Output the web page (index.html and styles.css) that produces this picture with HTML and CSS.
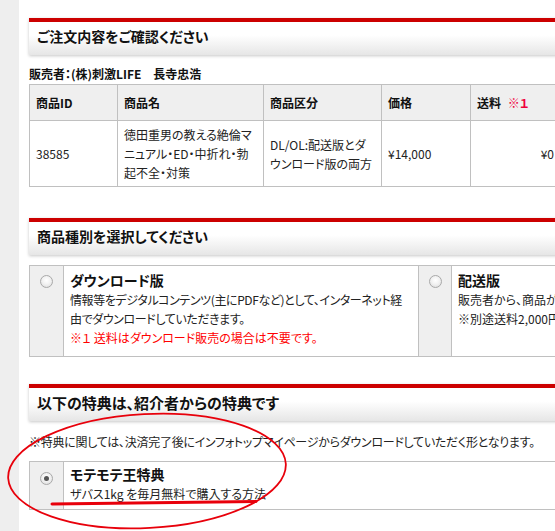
FILE: index.html
```html
<!DOCTYPE html>
<html lang="ja">
<head>
<meta charset="utf-8">
<title>ご注文内容をご確認ください</title>
<link rel="stylesheet" href="styles.css">
</head>
<body>
<div class="page">
  <aside class="strip"></aside>
  <main class="main">
    <section class="sec">
      <h2 class="sec-head">ご注文内容をご確認ください</h2>
      <p class="seller">販売者：(株)刺激LIFE　長寺忠浩</p>
      <table class="order">
        <colgroup>
          <col class="c-id"><col class="c-name"><col class="c-type"><col class="c-price"><col class="c-ship">
        </colgroup>
        <thead>
          <tr>
            <th>商品ID</th>
            <th>商品名</th>
            <th>商品区分</th>
            <th>価格</th>
            <th>送料 <span class="mark">※１</span></th>
          </tr>
        </thead>
        <tbody>
          <tr>
            <td>38585</td>
            <td>徳田重男の教える絶倫マニュアル・ED・中折れ・勃起不全・対策</td>
            <td>DL/OL:配送版とダウンロード版の両方</td>
            <td>¥14,000</td>
            <td class="right">¥0</td>
          </tr>
        </tbody>
      </table>
    </section>

    <section class="sec sec-2">
      <h2 class="sec-head">商品種別を選択してください</h2>
      <div class="opts">
        <div class="radio-cell"><span class="radio"></span></div>
        <div class="opt-body">
          <div class="opt-title">ダウンロード版</div>
          <p class="opt-desc tight">情報等をデジタルコンテンツ(主にPDFなど)として、インターネット経由でダウンロードしていただきます。</p>
          <p class="opt-desc red">※１ 送料はダウンロード販売の場合は不要です。</p>
        </div>
        <div class="radio-cell"><span class="radio"></span></div>
        <div class="opt-body">
          <div class="opt-title">配送版</div>
          <p class="opt-desc nowrap">販売者から、商品が郵送されます。</p>
          <p class="opt-desc nowrap">※別途送料2,000円がかかります。</p>
        </div>
      </div>
    </section>

    <section class="sec sec-3">
      <h2 class="sec-head big">以下の特典は、紹介者からの特典です</h2>
      <p class="note">※特典に関しては、決済完了後にインフォトップマイページからダウンロードしていただく形となります。</p>
      <div class="bonus">
        <div class="radio-cell bonus-radio"><span class="radio checked"></span></div>
        <div class="opt-body bonus-body">
          <div class="opt-title">モテモテ王特典</div>
          <p class="opt-desc">ザバス1kg を毎月無料で購入する方法</p>
        </div>
      </div>
    </section>
  </main>

  <svg class="annot" width="555" height="531" viewBox="0 0 555 531" aria-hidden="true">
    <ellipse cx="147" cy="471" rx="139" ry="57" transform="rotate(-3 147 471)" fill="none" stroke="#e8000b" stroke-width="1.8"/>
    <path d="M52 504 L256 501.5" stroke="#e8000b" stroke-width="3" stroke-linecap="round" fill="none"/>
  </svg>
</div>
</body>
</html>
```

FILE: styles.css
```css
* { box-sizing: border-box; }

html, body {
  margin: 0;
  padding: 0;
  background: #fff;
}

body {
  font-family: "Noto Sans CJK JP", "Noto Sans", sans-serif;
  font-feature-settings: "palt";
  color: #222;
  font-size: 12px;
}

.page {
  position: relative;
  display: flex;
  width: 555px;
  height: 531px;
  overflow: hidden;
}

.strip {
  flex: 0 0 19px;
  background: #eeeeee;
}

.main {
  flex: 0 0 auto;
  width: 788px;
  padding: 18px 0 0 10px;
}

.sec-head {
  margin: 0;
  height: 37px;
  border-top: 4px solid #cc0000;
  padding-left: 8px;
  line-height: 29px;
  font-size: 14px;
  font-weight: 700;
  color: #111;
  background: linear-gradient(to bottom, #ffffff 40%, #e6e6e6 100%);
  box-shadow: 0 1px 3px rgba(0, 0, 0, 0.22);
}

.sec-head.big {
  font-size: 15px;
}

.seller {
  margin: 9px 0 0;
  line-height: 20px;
  font-size: 12px;
  font-weight: 700;
  color: #111;
}

.order {
  width: 531px;
  table-layout: fixed;
  border-collapse: collapse;
  font-size: 12px;
}

.c-id { width: 88px; }
.c-name { width: 146px; }
.c-type { width: 118px; }
.c-price { width: 89px; }
.c-ship { width: 90px; }

.order th,
.order td {
  border: 1px solid #c0c0c0;
  text-align: left;
  vertical-align: middle;
  line-height: 19px;
}

.order th {
  background: #efefef;
  font-weight: 700;
  color: #111;
  padding: 8px 6px;
}

.order td {
  padding: 4px 6px;
  color: #222;
}

.order td.right {
  text-align: right;
}

.mark {
  color: #f0003c;
  margin-left: 4px;
}

.sec-2 { margin-top: 31px; }
.sec-3 { margin-top: 27px; }

.opts {
  margin-top: 10px;
  display: grid;
  grid-template-columns: 34px 355px 33px 366px;
  border-top: 1px solid #c0c0c0;
  border-left: 1px solid #c0c0c0;
  border-bottom: 1px solid #c0c0c0;
}

.radio-cell {
  background: #efefef;
  border-right: 1px solid #c0c0c0;
  display: flex;
  justify-content: center;
  align-items: flex-start;
  padding-top: 9px;
}

.radio {
  display: block;
  width: 13px;
  height: 13px;
  border-radius: 50%;
  border: 1px solid #a9a9a9;
  background: radial-gradient(circle at 50% 40%, #ffffff 0%, #f2f2f2 45%, #d9d9d9 100%);
  position: relative;
}

.radio.checked::after {
  content: "";
  position: absolute;
  left: 3px;
  top: 3px;
  width: 5px;
  height: 5px;
  border-radius: 50%;
  background: #555;
}

.opt-body {
  border-right: 1px solid #c0c0c0;
  padding: 4px 6px 9px 6px;
}

.opt-title {
  font-size: 14px;
  font-weight: 700;
  line-height: 20px;
  color: #111;
}

.opt-desc {
  margin: 0;
  font-size: 12px;
  line-height: 19px;
  color: #222;
}

.opt-desc.tight {
  letter-spacing: -0.4px;
}

.opt-desc.red {
  color: #ff0000;
}

.opt-desc.nowrap {
  white-space: nowrap;
}

.note {
  margin: 11px 0 0;
  font-size: 12px;
  line-height: 19px;
  color: #222;
  white-space: nowrap;
  letter-spacing: -0.27px;
}

.bonus {
  margin-top: 10px;
  display: grid;
  grid-template-columns: 34px 1fr;
  border-top: 1px solid #c0c0c0;
  border-left: 1px solid #c0c0c0;
  border-bottom: 1px solid #c0c0c0;
}

.bonus-radio {
  padding-top: 10px;
}

.bonus-body {
  padding: 2px 6px 6px 6px;
}

.annot {
  position: absolute;
  left: 0;
  top: 0;
  pointer-events: none;
}
```
